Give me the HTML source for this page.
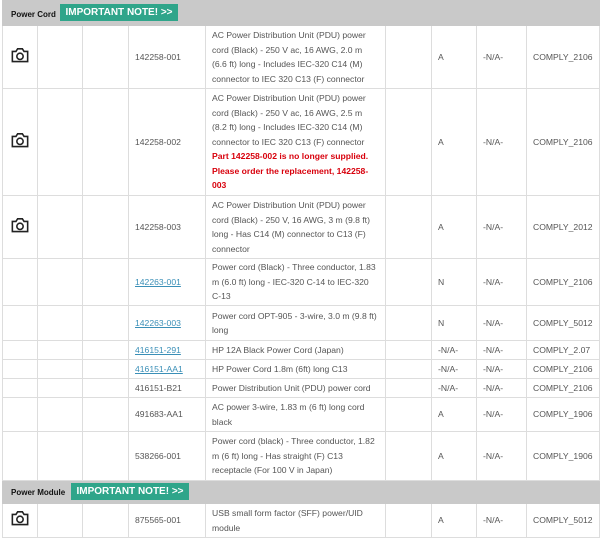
<!DOCTYPE html>
<html><head><meta charset="utf-8"><style>
body{margin:0;background:#fff;width:602px;height:540px;overflow:hidden;font-family:"Liberation Sans",sans-serif;}
table{position:absolute;left:2px;top:0;border-collapse:collapse;table-layout:fixed;width:597px;}
td{border:1px solid #ddd;font-size:8.6px;color:#555;line-height:14.5px;padding:0 8px 0 6px;vertical-align:middle;overflow:hidden;}
tr.h td{background:#c9c9c9;border-color:#c9c9c9;position:relative;padding:0;}
.lab{position:absolute;left:8px;bottom:3px;font-weight:bold;font-size:8px;color:#111;}
.btn{position:absolute;left:57px;top:3px;height:17px;width:118px;background:#2fa58a;color:#fff;font-weight:bold;font-size:10px;line-height:17px;text-align:center;white-space:nowrap;}
a{color:#3a8fb7;text-decoration:underline;}
.red{color:#d8000c;font-weight:bold;}
.cam{text-align:center;padding:0;}
</style></head><body>
<svg width="0" height="0" style="position:absolute"><defs><symbol id="c" viewBox="0 0 16 14"><path d="M1.2 3.8h3.2l1.5-2.3h4.2l1.5 2.3h3.2v9H1.2z" fill="none" stroke="#222" stroke-width="1.4"/><circle cx="8" cy="8.2" r="2.8" fill="none" stroke="#222" stroke-width="1.4"/></symbol></defs></svg>
<table>
<colgroup><col style="width:35px"><col style="width:45px"><col style="width:46px"><col style="width:77px"><col style="width:180px"><col style="width:46px"><col style="width:45px"><col style="width:50px"><col style="width:73px"></colgroup>
<tr class="h" style="height:25px"><td colspan="9"><span class="lab">Power Cord</span><span class="btn">IMPORTANT NOTE! &gt;&gt;</span></td></tr>
<tr style="height:63px"><td class="cam"><svg width="18" height="16"><use href="#c"/></svg></td><td></td><td></td><td>142258-001</td><td>AC Power Distribution Unit (PDU) power cord (Black) - 250 V ac, 16 AWG, 2.0 m (6.6 ft) long - Includes IEC-320 C14 (M) connector to IEC 320 C13 (F) connector</td><td></td><td>A</td><td>-N/A-</td><td>COMPLY_2106</td></tr>
<tr style="height:107px"><td class="cam"><svg width="18" height="16"><use href="#c"/></svg></td><td></td><td></td><td>142258-002</td><td>AC Power Distribution Unit (PDU) power cord (Black) - 250 V ac, 16 AWG, 2.5 m (8.2 ft) long - Includes IEC-320 C14 (M) connector to IEC 320 C13 (F) connector<br><span class="red">Part 142258-002 is no longer supplied. Please order the replacement, 142258-003</span></td><td></td><td>A</td><td>-N/A-</td><td>COMPLY_2106</td></tr>
<tr style="height:63px"><td class="cam"><svg width="18" height="16"><use href="#c"/></svg></td><td></td><td></td><td>142258-003</td><td>AC Power Distribution Unit (PDU) power cord (Black) - 250 V, 16 AWG, 3 m (9.8 ft) long - Has C14 (M) connector to C13 (F) connector</td><td></td><td>A</td><td>-N/A-</td><td>COMPLY_2012</td></tr>
<tr style="height:47px"><td></td><td></td><td></td><td><a>142263-001</a></td><td>Power cord (Black) - Three conductor, 1.83 m (6.0 ft) long - IEC-320 C-14 to IEC-320 C-13</td><td></td><td>N</td><td>-N/A-</td><td>COMPLY_2106</td></tr>
<tr style="height:35px"><td></td><td></td><td></td><td><a>142263-003</a></td><td>Power cord OPT-905 - 3-wire, 3.0 m (9.8 ft) long</td><td></td><td>N</td><td>-N/A-</td><td>COMPLY_5012</td></tr>
<tr style="height:19px"><td></td><td></td><td></td><td><a>416151-291</a></td><td>HP 12A Black Power Cord (Japan)</td><td></td><td>-N/A-</td><td>-N/A-</td><td>COMPLY_2.07</td></tr>
<tr style="height:19px"><td></td><td></td><td></td><td><a>416151-AA1</a></td><td>HP Power Cord 1.8m (6ft) long C13</td><td></td><td>-N/A-</td><td>-N/A-</td><td>COMPLY_2106</td></tr>
<tr style="height:19px"><td></td><td></td><td></td><td>416151-B21</td><td>Power Distribution Unit (PDU) power cord</td><td></td><td>-N/A-</td><td>-N/A-</td><td>COMPLY_2106</td></tr>
<tr style="height:34px"><td></td><td></td><td></td><td>491683-AA1</td><td>AC power 3-wire, 1.83 m (6 ft) long cord black</td><td></td><td>A</td><td>-N/A-</td><td>COMPLY_1906</td></tr>
<tr style="height:49px"><td></td><td></td><td></td><td>538266-001</td><td>Power cord (black) - Three conductor, 1.82 m (6 ft) long - Has straight (F) C13 receptacle (For 100 V in Japan)</td><td></td><td>A</td><td>-N/A-</td><td>COMPLY_1906</td></tr>
<tr class="h" style="height:23px"><td colspan="9"><span class="lab">Power Module</span><span class="btn" style="left:68px;top:2px">IMPORTANT NOTE! &gt;&gt;</span></td></tr>
<tr style="height:34px"><td class="cam"><svg width="18" height="16"><use href="#c"/></svg></td><td></td><td></td><td>875565-001</td><td>USB small form factor (SFF) power/UID module</td><td></td><td>A</td><td>-N/A-</td><td>COMPLY_5012</td></tr>
</table>
</body></html>
